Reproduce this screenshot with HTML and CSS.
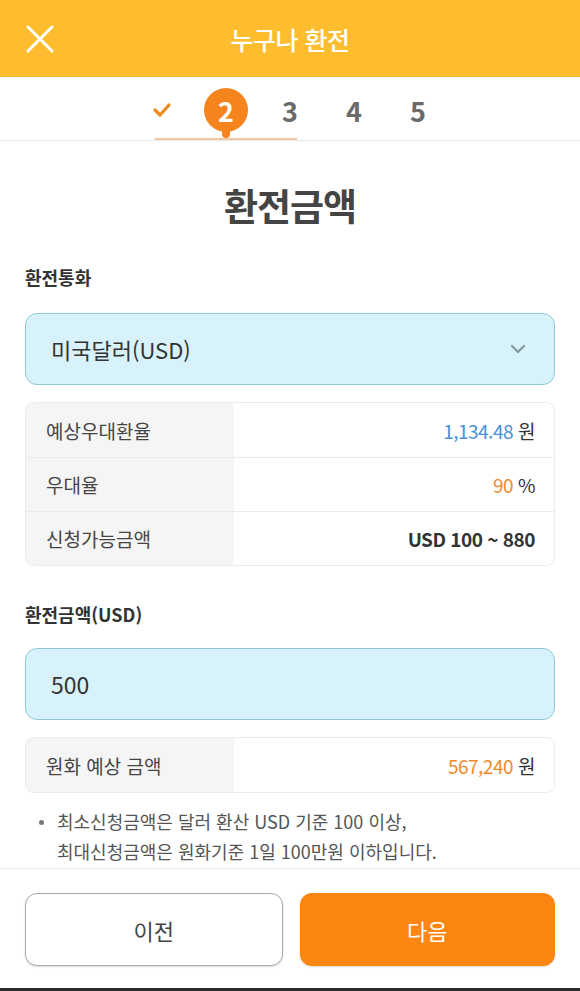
FILE: index.html
```html
<!DOCTYPE html>
<html lang="ko">
<head>
    <meta charset="UTF-8">
    <meta name="viewport" content="width=device-width, initial-scale=1.0">
    <title>누구나 환전</title>
    <link rel="stylesheet" href="styles.css">
</head>
<body>
    <div class="app">
        <div class="topbar">
            <button class="close-btn" type="button" aria-label="닫기">
                <svg width="28" height="28" viewBox="0 0 28 28">
                    <path d="M2 2 L26 26 M26 2 L2 26" stroke="#fff" stroke-width="3" stroke-linecap="round" fill="none"/>
                </svg>
            </button>
            <h1>누구나 환전</h1>
        </div>

        <div class="steps">
            <span class="step done">
                <svg width="20" height="16" viewBox="0 0 20 16">
                    <path d="M3 8 L8 13 L17 3" stroke="#f08a1c" stroke-width="3.2" stroke-linecap="round" stroke-linejoin="round" fill="none"/>
                </svg>
            </span>
            <span class="step current"><span class="dot">2</span></span>
            <span class="step">3</span>
            <span class="step">4</span>
            <span class="step">5</span>
        </div>

        <div class="content">
            <h2 class="page-title">환전금액</h2>

            <div class="field">
                <label class="field-label">환전통화</label>
                <div class="select-box">
                    <span>미국달러(USD)</span>
                    <svg width="16" height="10" viewBox="0 0 16 10">
                        <path d="M2 2 L8 8 L14 2" stroke="#8a9aa0" stroke-width="2.4" stroke-linecap="round" stroke-linejoin="round" fill="none"/>
                    </svg>
                </div>
                <div class="info-table">
                    <div class="info-row">
                        <div class="info-key">예상우대환율</div>
                        <div class="info-val"><span class="blue">1,134.48</span> 원</div>
                    </div>
                    <div class="info-row">
                        <div class="info-key">우대율</div>
                        <div class="info-val"><span class="orange">90</span> %</div>
                    </div>
                    <div class="info-row">
                        <div class="info-key">신청가능금액</div>
                        <div class="info-val strong">USD 100 ~ 880</div>
                    </div>
                </div>
            </div>

            <div class="field">
                <label class="field-label" for="amount">환전금액(USD)</label>
                <input class="amount-input" id="amount" type="text" value="500">
                <div class="info-table">
                    <div class="info-row">
                        <div class="info-key">원화 예상 금액</div>
                        <div class="info-val"><span class="orange">567,240</span> 원</div>
                    </div>
                </div>
            </div>

            <ul class="notes">
                <li>최소신청금액은 달러 환산 USD 기준 100 이상,<br>최대신청금액은 원화기준 1일 100만원 이하입니다.</li>
            </ul>
        </div>

        <div class="footer">
            <button class="btn btn-prev" type="button">이전</button>
            <button class="btn btn-next" type="button">다음</button>
        </div>
        <div class="navbar"></div>
    </div>
</body>
</html>
```

FILE: styles.css
```css
* {
    margin: 0;
    padding: 0;
    box-sizing: border-box;
}

body {
    font-family: "Noto Sans CJK KR", "Noto Sans", sans-serif;
    background: #fff;
    color: #333;
}

.app {
    width: 580px;
    height: 991px;
    display: flex;
    flex-direction: column;
    overflow: hidden;
}

.topbar {
    height: 77px;
    background: #fdbd2e;
    display: flex;
    align-items: center;
    justify-content: center;
    position: relative;
}

.topbar h1 {
    color: #fff;
    font-size: 25px;
    font-weight: 500;
    letter-spacing: -0.5px;
}

.close-btn {
    position: absolute;
    left: 26px;
    top: 25px;
    background: none;
    border: none;
    display: flex;
}

.steps {
    height: 64px;
    padding-top: 3px;
    border-bottom: 1px solid #e6e6e6;
    display: flex;
    justify-content: center;
    align-items: center;
}

.step {
    width: 64px;
    height: 44px;
    display: flex;
    align-items: center;
    justify-content: center;
    font-size: 27px;
    font-weight: 700;
    color: #6a6a6a;
}

.step.current {
    position: relative;
}

.dot {
    position: relative;
    width: 44px;
    height: 44px;
    border-radius: 50%;
    background: #f4841b;
    color: #fff;
    display: flex;
    align-items: center;
    justify-content: center;
}

.dot::after {
    content: "";
    position: absolute;
    left: 50%;
    top: 40px;
    width: 8px;
    height: 10px;
    margin-left: -4px;
    background: #f4841b;
    border-radius: 0 0 4px 4px;
}

.step.current::before {
    content: "";
    position: absolute;
    left: -39px;
    top: 50px;
    width: 142px;
    height: 2px;
    background: #f6c7a0;
}

.content {
    flex: 1;
    padding: 0 25px;
}

.page-title {
    text-align: center;
    font-size: 37px;
    font-weight: 700;
    color: #444;
    margin-top: 37px;
    letter-spacing: -1px;
}

.field {
    margin-top: 32px;
}

.field + .field {
    margin-top: 35px;
}

.field-label {
    display: block;
    font-size: 18px;
    font-weight: 700;
    color: #333;
    margin-bottom: 23px;
}

.field + .field .field-label {
    margin-bottom: 21px;
}

.select-box,
.amount-input {
    width: 100%;
    height: 72px;
    background: #d7f2fb;
    border: 1px solid #92c9d8;
    border-radius: 12px;
    display: flex;
    align-items: center;
    justify-content: space-between;
    padding: 0 28px 0 25px;
    font-family: inherit;
    font-size: 22px;
    color: #333;
}

.amount-input {
    font-size: 23px;
    outline: none;
}

.info-table {
    margin-top: 17px;
    border: 1px solid #ececec;
    border-radius: 8px;
    overflow: hidden;
}

.info-row {
    display: flex;
    height: 54px;
}

.info-row + .info-row {
    border-top: 1px solid #ececec;
}

.info-key {
    width: 208px;
    background: #f5f5f5;
    display: flex;
    align-items: center;
    padding-left: 20px;
    font-size: 19px;
    color: #444;
}

.info-val {
    flex: 1;
    display: flex;
    align-items: center;
    justify-content: flex-end;
    gap: 5px;
    padding-right: 19px;
    font-size: 19px;
    color: #333;
    letter-spacing: -0.5px;
}

.info-val.strong {
    font-weight: 700;
}

.blue {
    color: #4a8fd9;
}

.orange {
    color: #f08a2e;
}

.notes {
    list-style: none;
    margin-top: 13px;
    padding-left: 32px;
}

.notes li {
    position: relative;
    font-size: 18px;
    line-height: 30px;
    color: #555;
}

.notes li::before {
    content: "";
    position: absolute;
    left: -18px;
    top: 14px;
    width: 5px;
    height: 5px;
    border-radius: 50%;
    background: #777;
}

.footer {
    border-top: 1px solid #eeeeee;
    height: 120px;
    padding: 24px 25px 0;
    display: flex;
    gap: 17px;
}

.btn {
    flex: 1;
    height: 73px;
    border-radius: 12px;
    font-family: inherit;
    font-size: 22px;
    cursor: pointer;
}

.btn-prev {
    background: #fff;
    border: 1px solid #aaa;
    color: #444;
    box-shadow: 0 1px 2px rgba(0,0,0,0.15);
}

.btn-next {
    background: #fd8612;
    border: none;
    color: #fff;
    box-shadow: 0 1px 2px rgba(0,0,0,0.15);
}

.navbar {
    height: 3px;
    background: #2a2a2a;
}
```
